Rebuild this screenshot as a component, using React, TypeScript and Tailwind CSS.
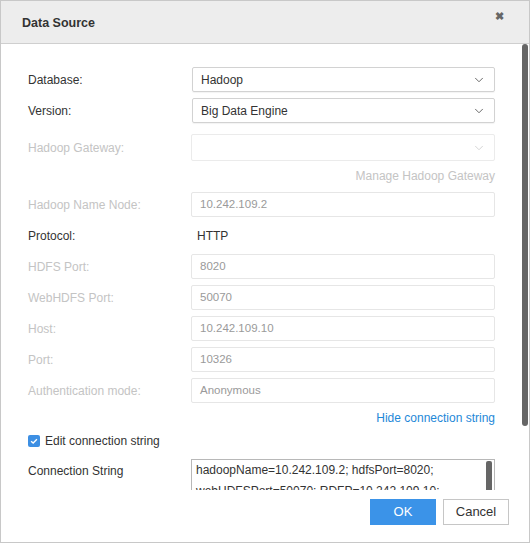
import { ChevronDown } from 'lucide-react'

const font = { fontFamily: '"Liberation Sans", Arial, sans-serif' }

function Label({ text, disabled }: { text: string; disabled?: boolean }) {
  return (
    <div className={`w-[164px] shrink-0 ${disabled ? 'text-[#c4c4c4]' : 'text-[#333]'}`}>{text}</div>
  )
}

function SelectRow({ label, value, disabled }: { label: string; value: string; disabled?: boolean }) {
  return (
    <div className="flex items-center">
      <Label text={label} disabled={disabled} />
      <div
        className={`flex-1 flex items-center justify-between rounded-[2px] border pl-[8px] pr-[8px] ${
          disabled ? 'h-[27px] border-[#ebebeb] -ml-[1px]' : 'h-[25px] border-[#d2d2d2] shadow-[0_1px_1px_rgba(0,0,0,0.05)]'
        }`}
      >
        <span className="text-[#333]">{value}</span>
        <ChevronDown className={`h-[14px] w-[14px] ${disabled ? 'text-[#cfcfcf]' : 'text-[#555]'}`} strokeWidth={1.5} />
      </div>
    </div>
  )
}

function InputRow({ label, value }: { label: string; value: string }) {
  return (
    <div className="flex items-center">
      <Label text={label} disabled />
      <div className="flex-1 h-[25px] -ml-[1px] flex items-center rounded-[2px] border border-[#e6e6e6] pl-[8px] text-[11.5px] text-[#9a9a9a]">
        {value}
      </div>
    </div>
  )
}

export default function App() {
  return (
    <div style={font} className="w-[530px] h-[543px] bg-white border border-[#c8c8c8] flex flex-col text-[12px] overflow-hidden relative">
      <div className="h-[43px] shrink-0 bg-[#ededed] border-b border-[#cfcfcf] flex items-center justify-between pl-[21px] pr-[25px]">
        <span className="text-[12.5px] font-bold text-[#333] mt-[2px]">Data Source</span>
        <span className="text-[#666] text-[11px] font-bold -mt-[12px]">✖</span>
      </div>

      <div className="relative flex-1 overflow-hidden">
        <div className="absolute right-[1px] top-[0px] w-[6px] h-[382px] rounded-[3px] bg-[#666]" />
        <div className="pl-[27px] pr-[34px] pt-[23px] flex flex-col">
          <div className="flex flex-col gap-[6px]">
            <SelectRow label="Database:" value="Hadoop" />
            <SelectRow label="Version:" value="Big Data Engine" />
          </div>
          <div className="mt-[11px]">
            <SelectRow label="Hadoop Gateway:" value="" disabled />
          </div>
          <div className="h-[20px] mt-[5px] flex items-center justify-end text-[#c4c4c4]">Manage Hadoop Gateway</div>
          <div className="mt-[6px] flex flex-col gap-[6px]">
            <InputRow label="Hadoop Name Node:" value="10.242.109.2" />
            <div className="flex items-center h-[25px]">
              <Label text="Protocol:" />
              <span className="text-[#333] pl-[5px]">HTTP</span>
            </div>
            <InputRow label="HDFS Port:" value="8020" />
            <InputRow label="WebHDFS Port:" value="50070" />
            <InputRow label="Host:" value="10.242.109.10" />
            <InputRow label="Port:" value="10326" />
            <InputRow label="Authentication mode:" value="Anonymous" />
          </div>
          <div className="h-[18px] mt-[6px] flex items-center justify-end text-[#1e88d8]">Hide connection string</div>
          <div className="h-[18px] mt-[5px] flex items-center gap-[5px]">
            <span className="w-[12px] h-[12px] rounded-[2px] bg-[#3d8fe3] flex items-center justify-center">
              <svg viewBox="0 0 12 12" className="w-[10px] h-[10px]">
                <path d="M2.5 6.2 L5 8.5 L9.5 3.8" fill="none" stroke="white" strokeWidth="1.6" />
              </svg>
            </span>
            <span className="text-[#333]">Edit connection string</span>
          </div>
          <div className="flex mt-[9px]">
            <div className="w-[164px] shrink-0 text-[#333] pt-[3px]">Connection String</div>
            <div className="relative flex-1 -ml-[1px] h-[60px] border border-[#b8b8b8] pl-[4px] pt-[0px] pr-[14px] text-[#333] leading-[21px]">
              <div className="absolute right-[2px] top-[1px] w-[6px] h-[50px] rounded-[2px] bg-[#666]" />
              <div>hadoopName=10.242.109.2; hdfsPort=8020;</div>
              <div>webHDFSPort=50070; RDFP=10.242.109.10;</div>
            </div>
          </div>
        </div>
      </div>

      <div className="h-[52px] shrink-0 bg-white flex items-start justify-end gap-[7px] pt-[9px] pr-[20px]">
        <button className="w-[66px] h-[26px] bg-[#3b93e8] text-white text-[13px]">OK</button>
        <button className="w-[66px] h-[26px] bg-white border border-[#c6c6c6] text-[#333] text-[13px]">Cancel</button>
      </div>
    </div>
  )
}
